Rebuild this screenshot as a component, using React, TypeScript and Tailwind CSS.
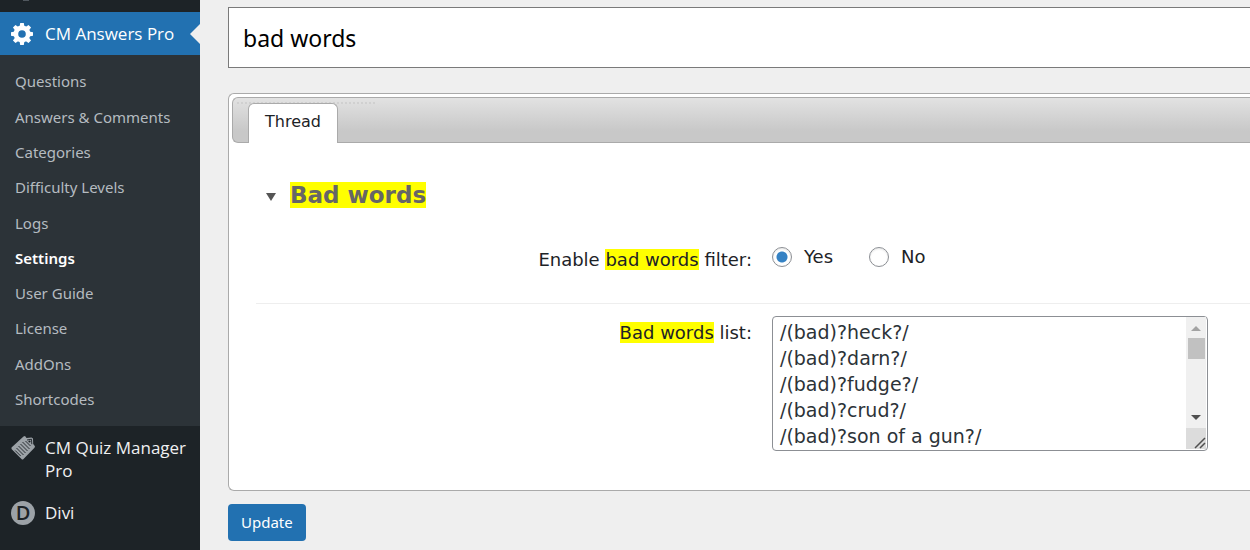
import type { ReactNode } from "react";

const submenu = [
  "Questions",
  "Answers & Comments",
  "Categories",
  "Difficulty Levels",
  "Logs",
  "Settings",
  "User Guide",
  "License",
  "AddOns",
  "Shortcodes",
];

const badWords = [
  "/(bad)?heck?/",
  "/(bad)?darn?/",
  "/(bad)?fudge?/",
  "/(bad)?crud?/",
  "/(bad)?son of a gun?/",
].join("\n");

function GearIcon({ className }: { className?: string }) {
  return (
    <svg viewBox="0 0 22 22" className={className} fill="currentColor" aria-hidden="true">
      {[0, 45, 90, 135].map((angle) => (
        <path key={angle} d="M9.2 0h3.6l.7 4h-5zM8.500 18h5l-.7 4H9.200z" transform={`rotate(${angle} 11 11)`} />
      ))}
      <path fillRule="evenodd" d="M11 2.600a8.400 8.400 0 1 0 0 16.800 8.400 8.400 0 0 0 0-16.800zm0 4.600a3.800 3.800 0 1 1 0 7.600 3.800 3.800 0 0 1 0-7.600z" />
    </svg>
  );
}

function ClipboardIcon({ className }: { className?: string }) {
  return (
    <svg viewBox="0 0 24 24" className={className} aria-hidden="true">
      <path d="M12.500.5 14 0l1.500 2 5-.5 1.500 1 .2 5.500 1.800 2.200-.5 1.500L12 23.500h-1L.5 13v-1.500z" fill="#9ca2a7" />
      <path
        d="m11.500 6 7 7M9.500 8l7 7M7.500 10l7 7M5.500 12l7 7M4.200 14.500l5.500 5.500"
        stroke="#1d2327"
        strokeWidth="0.9"
      />
      <path d="M14.500 5l5 5M16 4l4.500-.8.3 5" fill="none" stroke="#1d2327" strokeWidth="0.9" />
      <circle cx="18.500" cy="5.500" r="1.100" fill="#1d2327" />
    </svg>
  );
}

function Mark({ children }: { children: ReactNode }) {
  return <mark className="bg-[#ffff00] text-inherit">{children}</mark>;
}

function Sidebar() {
  return (
    <nav className="w-[200px] shrink-0 bg-[#1d2327] text-[#f0f0f1] overflow-hidden font-['Open_Sans',sans-serif]">
      <div className="h-3 pl-[23px]">
        <div className="w-1.5 h-px bg-[#50575e]" />
      </div>
      <a href="#answers" className="relative flex items-center h-[43px] pl-[11px] gap-3 bg-[#2271b1] text-white text-[17px]">
        <GearIcon className="size-[22px]" />
        CM Answers Pro
        <span className="absolute right-0 top-3 border-y-[10px] border-r-[10px] border-y-transparent border-r-[#efefef]" />
      </a>
      <ul className="grid auto-rows-fr h-[371px] py-[9px] bg-[#2c3338] font-['Noto_Sans',sans-serif] text-[15px] text-[#b5bbc0]">
        {submenu.map((item) => (
          <li key={item} className="flex items-center pl-[15px]">
            <a href="#settings" className={item === "Settings" ? "font-semibold text-white" : ""}>
              {item}
            </a>
          </li>
        ))}
      </ul>
      <a href="#quiz" className="flex items-start pt-[10px] pl-[11px] gap-[10px] text-[17px] leading-[23px]">
        <ClipboardIcon className="size-6 shrink-0" />
        <span>CM Quiz Manager Pro</span>
      </a>
      <a href="#divi" className="flex items-center pt-[19px] pb-6 pl-[11px] gap-[10px] text-[17px] leading-6">
        <span className="flex items-center justify-center size-6 rounded-full bg-[#9ca2a7] text-[#1d2327] text-xl leading-6 font-semibold">
          D
        </span>
        Divi
      </a>
    </nav>
  );
}

function Radio({ label, checked }: { label: string; checked?: boolean }) {
  return (
    <label className="flex items-center gap-3">
      <input
        type="radio"
        name="filter"
        defaultChecked={checked}
        className="appearance-none size-5 rounded-full border border-[#8c8f94] bg-white shadow-[inset_0_1px_2px_rgba(0,0,0,0.1)] checked:bg-[radial-gradient(circle,#3582c4_5px,transparent_6px)]"
      />
      {label}
    </label>
  );
}

function WordList() {
  return (
    <div className="relative w-[436px] max-w-full h-[135px]">
      <textarea
        id="words"
        defaultValue={badWords}
        className="block size-full resize-none overflow-hidden rounded border border-[#8c8f94] bg-white pl-[7px] pr-6 py-[2px] text-[19px] leading-[26px] text-[#2c3338]"
      />
      {/* scrollbar */}
      <div className="absolute right-[2px] top-px bottom-[2px] w-5 flex flex-col items-center bg-[#f0f0f0]">
        <span className="mt-[9px] border-x-[5px] border-b-[5px] border-x-transparent border-b-[#a3a3a3]" />
        <span className="mt-[7px] w-[17px] h-[21px] bg-[#c1c1c1]" />
        <span className="mt-auto mb-2 border-x-[5px] border-t-[5px] border-x-transparent border-t-[#505050]" />
        <span className="flex items-end justify-end w-full h-[21px] bg-[#dcdcdc]">
          <svg viewBox="0 0 12 12" className="size-3" stroke="#505050" strokeWidth="1.500" aria-hidden="true">
            <path d="M1 11 11 1M6 11l5-5" />
          </svg>
        </span>
      </div>
    </div>
  );
}

export default function App() {
  return (
    <div className="flex min-h-screen bg-[#efefef]">
      <Sidebar />
      <main className="flex-1 min-w-0 pl-7 pt-[7px] pb-2 font-['DejaVu_Sans',sans-serif] text-[#1d2327]">
        <input
          type="text"
          aria-label="Search settings"
          defaultValue="bad words"
          className="block w-full h-[61px] border border-r-0 border-[#7a7a7a] bg-white px-[14px] font-['Noto_Sans',sans-serif] text-[23px] text-black"
        />
        <section className="mt-[25px] h-[398px] rounded-l-md border border-r-0 border-[#aaa] bg-white pl-[3px] pt-[3px]">
          <div className="relative flex items-end h-[46px] rounded-l-md border border-r-0 border-[#aaa] bg-linear-to-b from-[#e2e2e2] to-[#c8c8c8] to-75% pl-[15px]">
            <span className="absolute left-1 top-1 w-[138px] border-t-2 border-dotted border-[#d0d0d0]" />
            <button className="relative -mb-px h-10 rounded-t-md border border-b-0 border-[#aaa] bg-white px-4 pb-1 text-base">
              Thread
            </button>
          </div>
          <div className="pl-6 pt-9">
            <h2 className="flex items-center gap-[14px] pl-[10px] text-[23px] leading-8 font-bold text-[#666]">
              <span className="mt-1 border-x-[5px] border-t-[8px] border-x-transparent border-t-[#555]" />
              <span>
                <Mark>Bad words</Mark>
              </span>
            </h2>
            <div className="grid grid-cols-2 gap-x-5 pl-[18px] pt-8 pb-[29px] border-b border-[#eee] text-lg">
              <div className="pt-[3px] text-right">
                Enable <Mark>bad words</Mark> filter:
              </div>
              <div className="flex items-start gap-9">
                <Radio label="Yes" checked />
                <Radio label="No" />
              </div>
            </div>
            <div className="grid grid-cols-2 gap-x-5 pl-[18px] pt-3 text-lg">
              <label htmlFor="words" className="pt-[3px] text-right">
                <Mark>Bad words</Mark> list:
              </label>
              <WordList />
            </div>
          </div>
        </section>
        <button className="mt-[13px] h-[37px] rounded bg-[#2271b1] px-[13px] font-['Noto_Sans',sans-serif] text-[15px] text-white">
          Update
        </button>
      </main>
    </div>
  );
}
